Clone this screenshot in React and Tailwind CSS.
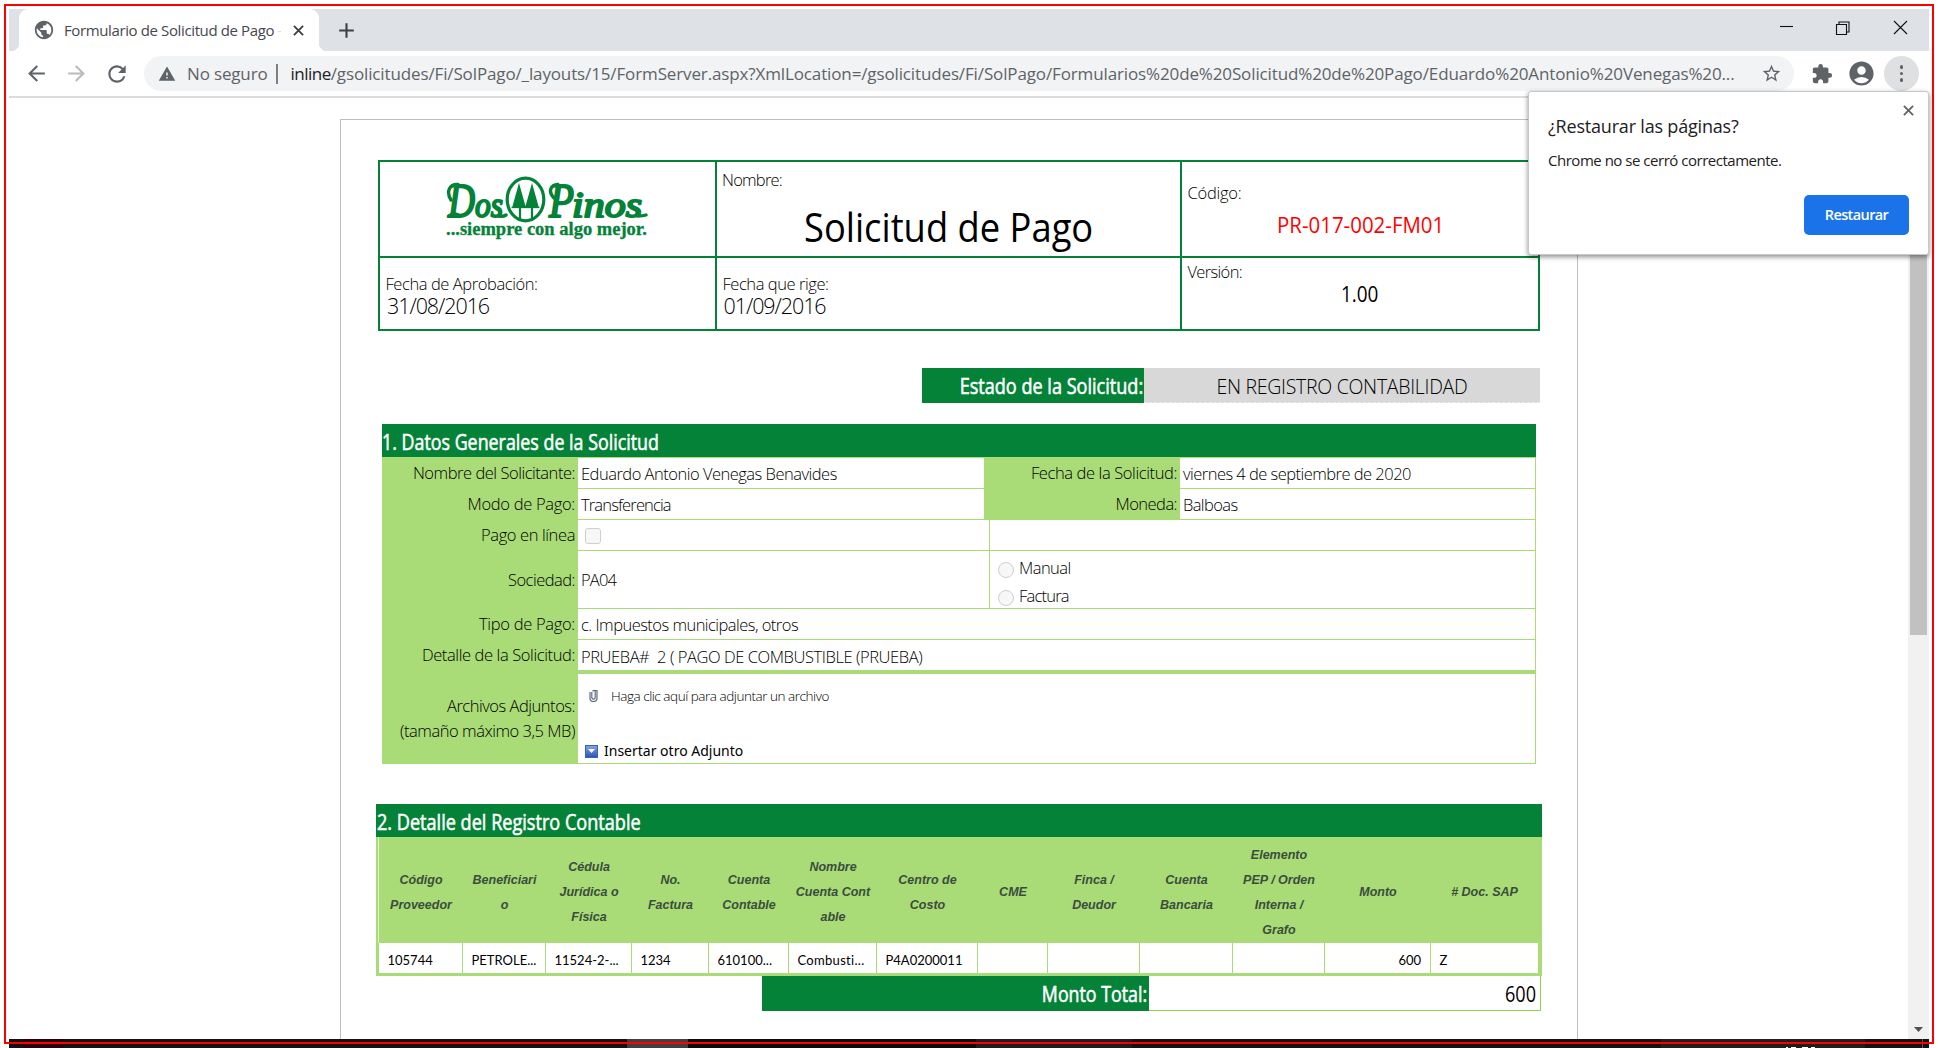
import {
  MdPublic,
  MdAdd,
  MdArrowBack,
  MdArrowForward,
  MdRefresh,
  MdWarning,
  MdStarBorder,
  MdExtension,
  MdAccountCircle,
} from "react-icons/md";

const LIGHT = "font-light text-black text-[16.5px] whitespace-pre";
const TITLE = "text-[21px] whitespace-nowrap text-white [-webkit-text-stroke:0.55px_white]";

function CloseIcon({ className }) {
  return (
    <svg className={className} viewBox="0 0 12 12" fill="none" stroke="currentColor" strokeWidth="2">
      <path d="M1 1l10 10M11 1L1 11" />
    </svg>
  );
}

function TabStrip() {
  return (
    <div className="flex h-[42px] bg-[#dee1e6]">
      <div className="flex w-[10px] items-end">
        <div className="ml-[2px] size-2 bg-[radial-gradient(circle_at_0_0,transparent_8px,white_8.5px)]" />
      </div>
      <div className="flex h-[42px] w-[300px] items-center rounded-t-[9px] bg-white pl-[14px]">
        <MdPublic className="size-[22px] text-[#5f6368]" />
        <span className="relative ml-[9px] w-[217px] overflow-hidden text-[15px] tracking-[-0.38px] whitespace-pre text-[#45494d]">
          Formulario de Solicitud de Pago <span className="text-[#dadce0]">-</span>
        </span>
        <CloseIcon className="ml-[12px] size-[11px] text-[#3c4043]" />
      </div>
      <div className="flex w-[8px] items-end">
        <div className="size-2 bg-[radial-gradient(circle_at_100%_0,transparent_8px,white_8.5px)]" />
      </div>
      <MdAdd className="mt-[8.5px] ml-[7px] size-[25px] text-[#3c4043]" />
      <svg className="ml-auto h-[42px] w-[160px]" viewBox="0 0 160 42" fill="none" stroke="#111" strokeWidth="1.1">
        <path d="M11 17.5h13" />
        <path d="M67.500 15.500h10v10h-10z M70 15.500v-2.500h10v10h-2.500" />
        <path d="M125 12l13 13M138 12l-13 13" />
      </svg>
    </div>
  );
}

function Toolbar() {
  return (
    <div className="flex h-[47px] items-center border-b-2 border-[#dadce0] bg-white pl-[15px] text-[#5f6368]">
      <MdArrowBack className="size-[25px]" />
      <MdArrowForward className="ml-[15px] size-[25px] text-[#b9bbbe]" />
      <MdRefresh className="ml-[15px] size-[26px]" />
      <div className="ml-[14px] flex h-[35px] w-[1650px] items-center rounded-full bg-[#f1f3f4] pl-[14px] text-[17px]">
        <MdWarning className="size-[18px]" />
        <span className="ml-[11px] tracking-[-0.16px]">No seguro</span>
        <div className="ml-[9px] h-5 w-[1.500px] bg-[#7c8085]" />
        <span className="ml-[12.500px] tracking-[-0.5px] text-[#202124]">inline</span>
        <span className="tracking-[-0.13px] whitespace-nowrap">
          /gsolicitudes/Fi/SolPago/_layouts/15/FormServer.aspx?XmlLocation=/gsolicitudes/Fi/SolPago/Formularios%20de%20Solicitud%20de%20Pago/Eduardo%20Antonio%20Venegas%20...
        </span>
        <MdStarBorder className="mr-[12px] ml-auto size-[21px] shrink-0" />
      </div>
      <MdExtension className="ml-[17px] size-[22px]" />
      <MdAccountCircle className="ml-[14px] size-[29px]" />
      <div className="ml-[8px] flex size-[35px] flex-col items-center justify-center gap-[3px] rounded-full bg-[#dfe0e2]">
        <div className="size-[3.500px] rounded-full bg-[#5f6368]" />
        <div className="size-[3.500px] rounded-full bg-[#5f6368]" />
        <div className="size-[3.500px] rounded-full bg-[#5f6368]" />
      </div>
    </div>
  );
}

function RestorePopup() {
  return (
    <div className="absolute top-[91px] left-[1528px] flex h-[164px] w-[401px] flex-col rounded-[3px] border border-[#c8c8c8] bg-white pl-[19px] text-[#202124] shadow-[0_2px_5px_rgba(0,0,0,0.45)]">
      <CloseIcon className="mt-[13px] ml-[355px] size-[11px] text-[#5f6368]" />
      <span className="-mt-[3px] text-[18px] leading-[27px] tracking-[-0.19px]">¿Restaurar las páginas?</span>
      <span className="mt-[9px] text-[15px] leading-[22px] tracking-[-0.48px]">Chrome no se cerró correctamente.</span>
      <div className="mt-[24px] ml-[256px] flex h-[40px] w-[105px] items-center justify-center rounded-[5px] bg-[#1a73e8] text-[14.500px] font-semibold tracking-[-0.6px] text-white">
        Restaurar
      </div>
    </div>
  );
}

function Logo() {
  return (
    <svg className="h-[66px] w-[204px]" viewBox="0 0 204 66" fill="#048238" fontFamily="'Liberation Serif', serif">
      <g fontStyle="italic" stroke="#048238" strokeWidth="2" strokeLinejoin="round">
        <text x="2" y="41" fontSize="48" textLength="27" lengthAdjust="spacingAndGlyphs">D</text>
        <text x="29" y="41" fontSize="35" textLength="28" lengthAdjust="spacingAndGlyphs">os</text>
        <text x="103" y="41" fontSize="48" textLength="25" lengthAdjust="spacingAndGlyphs">P</text>
        <text x="126" y="41" fontSize="35" textLength="70" lengthAdjust="spacingAndGlyphs">inos</text>
      </g>
      <g fill="none" stroke="#048238" strokeWidth="3.400" strokeLinecap="round">
        <path d="M3 40q5-4 11 0M53 40q4 1 7-1M192 40q5 0 8-1" />
        <path d="M5 24C0 16 3 8 12 8.500M108 22c-6-6-4-13 4-13.500" />
      </g>
      <ellipse cx="79.500" cy="23.500" rx="18.300" ry="21.300" fill="white" stroke="#048238" strokeWidth="3.200" />
      <path d="M73 7l7 25h-14zM86 7l7 25h-14z" />
      <path d="M65.500 31.500h28" stroke="#048238" strokeWidth="1.300" />
      <path d="M74 31v12M86 31v12" stroke="#048238" strokeWidth="2.200" />
      <text x="0" y="59" fontSize="18" fontWeight="bold" textLength="201" lengthAdjust="spacingAndGlyphs" stroke="#048238" strokeWidth="0.300">
        ...siempre con algo mejor.
      </text>
    </svg>
  );
}

function HeaderTable() {
  return (
    <div className="grid w-[1162px] grid-cols-[335px_463px_356px] grid-rows-[94px_71px] gap-[2px] border-2 border-[#048238] bg-[#048238] *:bg-white">
      <div className="flex items-start pt-[14px] pl-[66px]">
        <Logo />
      </div>
      <div className="flex flex-col items-start pl-[5px]">
        <span className={`${LIGHT} mt-[6px] leading-[24px] tracking-[-0.77px]`}>Nombre:</span>
        <span className="mt-[7px] ml-[82px] origin-left scale-x-[0.908] text-[40px] leading-[56px] whitespace-nowrap text-black">
          Solicitud de Pago
        </span>
      </div>
      <div className="flex flex-col items-start pl-[5.500px]">
        <span className={`${LIGHT} mt-[19px] leading-[24px] tracking-[-0.25px]`}>Código:</span>
        <span className="mt-[3px] ml-[89px] origin-left scale-x-[0.93] text-[22px] leading-[32px] whitespace-nowrap text-[#ff0000]">
          PR-017-002-FM01
        </span>
      </div>
      <div className="flex flex-col items-start pl-[5.500px]">
        <span className={`${LIGHT} mt-[14px] leading-[24px] tracking-[-0.42px]`}>Fecha de Aprobación:</span>
        <span className="-mt-px ml-[1.500px] text-[21.500px] leading-[22px] font-light tracking-[-1.08px] text-black">31/08/2016</span>
      </div>
      <div className="flex flex-col items-start pl-[5.500px]">
        <span className={`${LIGHT} mt-[14px] leading-[24px] tracking-[-0.44px]`}>Fecha que rige:</span>
        <span className="-mt-px ml-[1px] text-[21.500px] leading-[22px] font-light tracking-[-1.08px] text-black">01/09/2016</span>
      </div>
      <div className="flex flex-col items-start pl-[5.500px]">
        <span className={`${LIGHT} mt-[2px] leading-[24px] tracking-[-0.66px]`}>Versión:</span>
        <span className="-mt-[2px] ml-[153px] origin-left scale-x-[0.86] text-[22px] leading-[22px] text-black">1.00</span>
      </div>
    </div>
  );
}

function Status() {
  return (
    <div className="mt-[37px] ml-[544px] flex h-[35px] w-[618px]">
      <div className="flex w-[222px] items-center justify-end bg-[#048238] pt-[3px] pr-[1px]">
        <span className={`${TITLE} origin-right scale-x-[0.861]`}>Estado de la Solicitud:</span>
      </div>
      <div className="flex w-[396px] items-center justify-center border-b border-dashed border-[#e8eceb] bg-[#d8d8d8] pt-[4px]">
        <span className="text-[19.500px] font-light tracking-[-0.29px] text-black">EN REGISTRO CONTABILIDAD</span>
      </div>
    </div>
  );
}

function Label({ className = "", children }) {
  return (
    <div className={`flex items-center justify-end bg-[#a9db76] pr-[3px] ${className}`}>
      <span className={LIGHT}>{children}</span>
    </div>
  );
}

function Value({ className = "", children }) {
  return (
    <div className={`flex items-center border-b border-[#a9db76] pt-[2px] pl-[3px] ${className}`}>
      <span className={LIGHT}>{children}</span>
    </div>
  );
}

function Radio({ label, className }) {
  return (
    <div className={`flex items-start ${className}`}>
      <div className="mt-[6px] size-[16px] rounded-full border border-[#cfcfcf] bg-[#f7f7f7]" />
      <span className="ml-[5px] text-[16.500px] leading-[24px] font-light text-black">{label}</span>
    </div>
  );
}

function GeneralData() {
  return (
    <div className="mt-[21px] ml-[4px] w-[1154px]">
      <div className="flex h-[33px] items-center bg-[#048238] pt-[5px]">
        <span className={`${TITLE} origin-left scale-x-[0.85]`}>1. Datos Generales de la Solicitud</span>
      </div>
      <div className="border-t border-r border-b border-[#a9db76]">
        <div className="flex h-[31px]">
          <Label className="w-[196px] tracking-[-0.47px]">Nombre del Solicitante:</Label>
          <Value className="w-[406px] tracking-[-0.5px]">Eduardo Antonio Venegas Benavides</Value>
          <Label className="w-[196px] tracking-[-0.39px]">Fecha de la Solicitud:</Label>
          <Value className="w-[355px] tracking-[-0.53px]">viernes 4 de septiembre de 2020</Value>
        </div>
        <div className="flex h-[31px]">
          <Label className="w-[196px] tracking-[-0.3px]">Modo de Pago:</Label>
          <Value className="w-[406px] tracking-[-0.85px]">Transferencia</Value>
          <Label className="w-[196px] tracking-[-0.53px]">Moneda:</Label>
          <Value className="w-[355px] tracking-[-0.61px]">Balboas</Value>
        </div>
        <div className="flex h-[31px]">
          <Label className="w-[196px] tracking-[-0.39px]">Pago en línea</Label>
          <div className="flex w-[411px] items-center border-b border-[#a9db76] pt-[2px] pl-[7px]">
            <div className="size-[16px] rounded-[3px] border border-[#cfcfcf] bg-[#f7f7f7]" />
          </div>
          <div className="w-[546px] border-b border-l border-[#a9db76]" />
        </div>
        <div className="flex h-[58px]">
          <Label className="w-[196px] tracking-[-0.51px]">Sociedad:</Label>
          <Value className="w-[411px] tracking-[-0.8px]">PA04</Value>
          <div className="flex w-[546px] flex-col border-b border-l border-[#a9db76] pl-[8px]">
            <Radio label="Manual" className="mt-[5px] h-[28px] tracking-[-0.55px]" />
            <Radio label="Factura" className="h-[24px] tracking-[-0.8px]" />
          </div>
        </div>
        <div className="flex h-[31px]">
          <Label className="w-[196px] tracking-[-0.3px]">Tipo de Pago:</Label>
          <Value className="w-[957px] tracking-[-0.53px]">c. Impuestos municipales, otros</Value>
        </div>
        <div className="flex h-[34px]">
          <Label className="w-[196px] pb-[3px] tracking-[-0.39px]">Detalle de la Solicitud:</Label>
          <Value className="w-[957px] border-b-4 pt-[4px] tracking-[-0.43px]">{"PRUEBA#  2 ( PAGO DE COMBUSTIBLE (PRUEBA)"}</Value>
        </div>
        <div className="flex h-[89px]">
          <div className="flex w-[196px] flex-col items-end bg-[#a9db76] pt-[19px] pr-[3px] leading-[25px]">
            <span className={`${LIGHT} tracking-[-0.48px]`}>Archivos Adjuntos:</span>
            <span className={`${LIGHT} tracking-[-0.47px]`}>(tamaño máximo 3,5 MB)</span>
          </div>
          <div className="flex flex-col pl-[7px]">
            <div className="mt-[12px] flex items-center">
              <svg className="-mt-[2px] ml-[4px] h-[13px] w-[9px]" viewBox="0 0 9 13" fill="none" stroke="#5d6b7f" strokeWidth="1.200">
                <path d="M2.800 3v5.500a1.700 1.700 0 0 0 3.400 0V2.500a1.200 1.200 0 0 0-2.400 0M1 3v6.500a3.500 3 0 0 0 7 0V1.500H4" />
              </svg>
              <span className="ml-[13px] text-[13.500px] leading-[20px] font-light tracking-[-0.46px] text-black">
                Haga clic aquí para adjuntar un archivo
              </span>
            </div>
            <div className="mt-[35px] flex items-center">
              <div className="flex size-[13px] items-center justify-center border border-[#3e63ad] bg-linear-to-b from-[#7fa3e6] to-[#2f55b5]">
                <svg className="h-[4px] w-[7px]" viewBox="0 0 7 4" fill="white">
                  <path d="M0 0h7l-3.500 4z" />
                </svg>
              </div>
              <span className="ml-[6px] font-['Noto_Sans',sans-serif] text-[14px] leading-[20px] text-black">Insertar otro Adjunto</span>
            </div>
          </div>
        </div>
      </div>
    </div>
  );
}

const COLS =
  "grid grid-cols-[84px_83px_86px_77px_80px_88px_101px_70px_92px_93px_92px_106px_107px]";

const headers = [
  ["Código", "Proveedor"],
  ["Beneficiari", "o"],
  ["Cédula", "Jurídica o", "Física"],
  ["No.", "Factura"],
  ["Cuenta", "Contable"],
  ["Nombre", "Cuenta Cont", "able"],
  ["Centro de", "Costo"],
  ["CME"],
  ["Finca /", "Deudor"],
  ["Cuenta", "Bancaria"],
  ["Elemento", "PEP / Orden", "Interna /", "Grafo"],
  ["Monto"],
  ["# Doc. SAP"],
];

const cells = [
  "105744", "PETROLE...", "11524-2-...", "1234", "610100...", "Combusti...", "P4A0200011",
  "", "", "", "", "600", "Z",
];

function AccountingDetail() {
  return (
    <div className="mt-[40px] -ml-[2px] w-[1166px]">
      <div className="flex h-[33px] items-center bg-[#048238] pt-[5px] pl-[1px]">
        <span className={`${TITLE} origin-left scale-x-[0.862]`}>2. Detalle del Registro Contable</span>
      </div>
      <div className="border-r-4 border-b-[3px] border-l-2 border-[#a9db76] bg-[#a9db76]">
        <div className={`${COLS} h-[106px] border-l border-[#e3f3d0] pt-[5px]`}>
          {headers.map((lines, i) => (
            <div
              key={i}
              className="flex flex-col items-center justify-center font-['Liberation_Sans',sans-serif] text-[12.500px] leading-[25px] font-bold whitespace-nowrap text-[#3b4d3e] italic"
            >
              {lines.map((line) => (
                <span key={line}>{line}</span>
              ))}
            </div>
          ))}
        </div>
        <div className={`${COLS} ml-[1px] h-[30px]`}>
          {cells.map((text, i) => (
            <div
              key={i}
              className="flex items-center border-r border-[#a9db76] bg-white pt-[5px] pr-[9px] pl-[8.500px] font-['Lato',sans-serif] text-[13px] text-black last:border-r-0 nth-12:justify-end nth-6:tracking-[0.3px]"
            >
              {text}
            </div>
          ))}
        </div>
      </div>
      <div className="ml-[386px] flex h-[35px] w-[779px]">
        <div className="flex w-[387px] items-center justify-end bg-[#048238] pt-[2px] pr-[2px]">
          <span className={`${TITLE} origin-right scale-x-[0.848]`}>Monto Total:</span>
        </div>
        <div className="flex w-[392px] items-center justify-end border-r border-b border-[#92d050] pt-[4px] pr-[4px]">
          <span className="origin-right scale-x-[0.86] text-[21px] text-black">600</span>
        </div>
      </div>
    </div>
  );
}

function Scrollbar() {
  return (
    <div className="ml-auto flex w-[21px] flex-col items-center bg-[#f1f1f1] pt-[21px] pb-[7px]">
      <div className="-ml-px h-[516px] w-[17px] bg-[#c1c1c1]" />
      <svg className="mt-auto -ml-px h-[5px] w-[9px]" viewBox="0 0 9 5" fill="#505050">
        <path d="M0 0h9L4.500 5z" />
      </svg>
    </div>
  );
}

function Taskbar() {
  return (
    <div className="flex h-[9px] bg-[#111116]">
      <div className="ml-[14px] w-[40px] bg-[#25000f]" />
      <div className="ml-[564px] w-[61px] bg-[#404044]" />
      <div className="w-[288px] bg-[#060b0c]" />
      <div className="w-[156px] bg-[#1d1d1f]" />
      <div className="ml-[529px] flex w-[204px] items-end bg-[#1e1e1f] pl-[125px]">
        <div className="h-px w-[2px] bg-white" />
        <div className="ml-[3px] h-px w-[5px] bg-white" />
        <div className="ml-[6px] h-px w-[6px] bg-white" />
        <div className="ml-[3px] h-px w-[4px] bg-white" />
      </div>
      <div className="ml-[57px] w-px bg-[#5a5a5a]" />
    </div>
  );
}

export default function App() {
  return (
    <div className="relative h-[1048px] w-[1938px] overflow-hidden bg-white pt-[9px] pl-[9px] font-['Open_Sans','Noto_Sans',sans-serif]">
      <div className="flex h-[1039px] w-[1920px] flex-col">
        <TabStrip />
        <Toolbar />
        <div className="flex h-[941px]">
          <div className="mt-[21px] ml-[331px] h-[920px] w-[1238px] border border-b-0 border-[#bfbfbf] pt-[40px] pl-[37px]">
            <HeaderTable />
            <Status />
            <GeneralData />
            <AccountingDetail />
          </div>
          <Scrollbar />
        </div>
        <Taskbar />
      </div>
      <RestorePopup />
      <div className="pointer-events-none absolute top-[4px] left-[4px] h-[1040px] w-[1930px] border-2 border-[#ff0000]" />
    </div>
  );
}
